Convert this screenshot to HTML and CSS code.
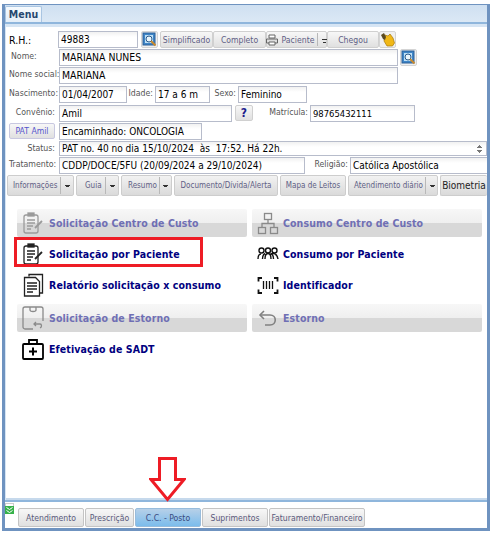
FILE: index.html
```html
<!DOCTYPE html>
<html lang="pt">
<head>
    <meta charset="UTF-8">
    <title>Menu</title>
    <link rel="stylesheet" href="styles.css">
</head>
<body>
    <div class="frame">
        <div class="tabstrip"><div class="tab">Menu</div></div>

        <div class="panel">
            <!-- Patient form -->
            <div class="form">
                <div class="row">
                    <span class="label label-main">R.H.:</span>
                    <span class="field w-rh">49883</span>
                    <button class="icon-btn ml-3"><svg width="15" height="15" viewBox="0 0 15 15"><rect x="1" y="1" width="12" height="12" fill="#3f86c8" stroke="#2c5f96"/><rect x="3" y="3" width="8" height="8" fill="#bfe0f5"/><circle cx="7" cy="7" r="3" fill="#e9f5fc" stroke="#2a5a8c"/><path d="M9 9l4.500 4.500" stroke="#c98a2c" stroke-width="2"/></svg></button>
                    <button class="btn w-simpl ml-2">Simplificado</button>
                    <button class="btn w-compl">Completo</button>
                    <button class="btn split w-pac">
                        <svg class="ico" width="14" height="12" viewBox="0 0 14 12"><path d="M4 1h6v3H4z" fill="#fff" stroke="#666"/><path d="M1.500 5h11v4h-11z" fill="#ddd" stroke="#666"/><path d="M4 8h6v3H4z" fill="#fff" stroke="#666"/></svg>
                        <span class="btn-text">Paciente</span><span class="caret"></span>
                    </button>
                    <button class="btn w-chegou">Chegou</button>
                    <button class="icon-btn"><svg width="15" height="15" viewBox="0 0 15 15"><path d="M5 3l3 1 2-2 3 4 1.500 5-2 3H7L4 9z" fill="#f0b818" stroke="#a8780c" stroke-width=".7"/><path d="M1 3l3-2 2 4-1 3-2-1z" fill="#5a4a20"/></svg></button>
                </div>
                <div class="row">
                    <span class="label label-left">Nome:</span>
                    <span class="field field-caps w-full">MARIANA NUNES</span>
                    <button class="icon-btn ml-2"><svg width="15" height="15" viewBox="0 0 15 15"><rect x="1" y="1" width="12" height="12" fill="#3f86c8" stroke="#2c5f96"/><rect x="3" y="3" width="8" height="8" fill="#bfe0f5"/><circle cx="7" cy="7" r="3" fill="#e9f5fc" stroke="#2a5a8c"/><path d="M9 9l4.500 4.500" stroke="#c98a2c" stroke-width="2"/></svg></button>
                </div>
                <div class="row row-tall">
                    <span class="label">Nome social:</span>
                    <span class="field field-caps w-full">MARIANA</span>
                </div>
                <div class="row row-tall">
                    <span class="label">Nascimento:</span>
                    <span class="field w-nasc">01/04/2007</span>
                    <span class="label-inline w-idade">Idade:</span>
                    <span class="field w-age">17 a 6 m</span>
                    <span class="label-inline w-sexo">Sexo:</span>
                    <span class="field w-sex">Feminino</span>
                </div>
                <div class="row">
                    <span class="label">Convênio:</span>
                    <span class="field w-conv">Amil</span>
                    <button class="btn btn-help">?</button>
                    <span class="label-inline w-matr">Matrícula:</span>
                    <span class="field field-digits w-matr-field">98765432111</span>
                </div>
                <div class="row">
                    <button class="btn btn-pat">PAT Amil</button>
                    <span class="field w-enc">Encaminhado: ONCOLOGIA</span>
                </div>
                <div class="row row-short">
                    <span class="label">Status:</span>
                    <span class="field field-short w-status">PAT no. 40 no dia 15/10/2024 &nbsp;às &nbsp;17:52. Há 22h.<span class="spinner"></span></span>
                </div>
                <div class="row">
                    <span class="label">Tratamento:</span>
                    <span class="field w-trat">CDDP/DOCE/5FU (20/09/2024 a 29/10/2024)</span>
                    <span class="label-inline w-relig">Religião:</span>
                    <span class="field w-relig-field">Católica Apostólica</span>
                </div>
            </div>

            <!-- Toolbar -->
            <div class="toolbar">
                <button class="btn tool split-tool w-info"><span class="btn-text">Informações</span><span class="caret"></span></button>
                <button class="btn tool split-tool w-guia"><span class="btn-text">Guia</span><span class="caret"></span></button>
                <button class="btn tool split-tool w-res"><span class="btn-text">Resumo</span><span class="caret"></span></button>
                <button class="btn tool w-doc">Documento/Dívida/Alerta</button>
                <button class="btn tool w-mapa">Mapa de Leitos</button>
                <button class="btn tool split-tool w-atend"><span class="btn-text">Atendimento diário</span><span class="caret"></span></button>
                <button class="btn tool w-bio">Biometria</button>
            </div>

            <!-- Menu items -->
            <div class="menu">
                <div class="item off">
                    <svg class="ico" width="24" height="24" viewBox="0 0 24 24" fill="none" stroke="#9a9a9a" stroke-width="1.300"><rect x="3" y="4" width="14" height="18" rx="2"/><rect x="7" y="2" width="6" height="3" fill="#9a9a9a"/><path d="M6 9h8M6 12h8M6 15h6M6 18h4"/><path d="M14 17l7-7" stroke-width="1.800"/></svg>
                    <span>Solicitação Centro de Custo</span>
                </div>
                <div class="item item-r off">
                    <svg class="ico" width="24" height="24" viewBox="0 0 24 24" fill="none" stroke="#8a8a8a" stroke-width="1.300"><rect x="8.500" y="2.500" width="7" height="6"/><rect x="2.500" y="16.500" width="7" height="6"/><rect x="14.500" y="16.500" width="7" height="6"/><path d="M12 8.500v4M6 16.500v-4h12v4"/></svg>
                    <span>Consumo Centro de Custo</span>
                </div>
                <div class="item">
                    <svg class="ico" width="24" height="24" viewBox="0 0 24 24" fill="none" stroke="#222" stroke-width="1.300"><rect x="3" y="4" width="14" height="18" rx="2"/><rect x="7" y="2" width="6" height="3" fill="#222"/><path d="M6 9h8M6 12h8M6 15h6M6 18h4"/><path d="M14 17l7-7" stroke-width="1.800"/></svg>
                    <span>Solicitação por Paciente</span>
                </div>
                <div class="item item-r">
                    <svg class="ico" width="24" height="24" viewBox="0 0 24 24" fill="none" stroke="#111" stroke-width="1.400"><circle cx="5.500" cy="8.500" r="2.500"/><circle cx="12" cy="8.500" r="2.500"/><circle cx="18.500" cy="8.500" r="2.500"/><path d="M2 17c0-4 2-5 3-5M9 11.500c-2 1-2.500 3-2.500 5.500M17.500 17c0-3-1-5-3-5.500M15 12c2-1 6-1 7 5M9 17c0-4 1.500-5.500 3-5.500s3 1.500 3 5.500"/></svg>
                    <span>Consumo por Paciente</span>
                </div>
                <div class="item">
                    <svg class="ico" width="24" height="24" viewBox="0 0 24 24" fill="none" stroke="#222" stroke-width="1.300"><path d="M8 3.500V1.500h13.500V20H19"/><path d="M3.500 4.500h11l4 4V23h-15z"/><path d="M6 10h10M6 13h10M6 16h10M6 19h6" stroke-width="1.500"/></svg>
                    <span>Relatório solicitação x consumo</span>
                </div>
                <div class="item item-r">
                    <svg class="ico" width="24" height="24" viewBox="0 0 24 24" fill="none" stroke="#111"><path d="M6 5H2.500v3.500M18 5h3.500v3.500M2.500 16.500V20H6M21.500 16.500V20H18" stroke-width="1.800"/><path d="M7.500 8v8M10.500 8v8M13.500 8v8M16.500 8v8" stroke-width="1.300"/></svg>
                    <span>Identificador</span>
                </div>
                <div class="item off mt-gap">
                    <svg class="ico" width="24" height="24" viewBox="0 0 24 24" fill="none" stroke="#8a8a8a" stroke-width="1.300"><path d="M12 23H4a2 2 0 0 1-2-2V3a2 2 0 0 1 2-2h16a2 2 0 0 1 2 2v12"/><path d="M9 1v3c0 2 6 2 6 0V1"/><path d="M15 16l-2 2 2 2M13 18h6c2 0 2 3 0 4"/></svg>
                    <span>Solicitação de Estorno</span>
                </div>
                <div class="item item-r off mt-gap">
                    <svg class="ico" width="24" height="24" viewBox="0 0 24 24" fill="none" stroke="#808080" stroke-width="1.600"><path d="M8 5L4 9l4 4"/><path d="M4 9h10c7 0 7 10 0 10h-5"/></svg>
                    <span>Estorno</span>
                </div>
                <div class="item mt-gap">
                    <svg class="ico" width="24" height="24" viewBox="0 0 24 24" fill="none" stroke="#000" stroke-width="1.800"><rect x="2" y="7" width="20" height="15" rx="1"/><path d="M8 7V3h8v4"/><path d="M12 10.500v8M8 14.500h8" stroke-width="2"/></svg>
                    <span>Efetivação de SADT</span>
                </div>
            </div>
        </div>

        <div class="footer">
            <svg class="corner-icon" width="9" height="12" viewBox="0 0 9 12"><rect x=".5" y=".5" width="8" height="3" fill="#fff" stroke="#ccc"/><rect x="0" y="3" width="9" height="8" fill="#37b24a"/><path d="M1.500 4.500l3 2 3-2M1.500 7.500l3 2 3-2" fill="none" stroke="#fff"/></svg>
            <button class="btn foot w-f1">Atendimento</button>
            <button class="btn foot w-f2">Prescrição</button>
            <button class="btn foot foot-on w-f3">C.C. - Posto</button>
            <button class="btn foot w-f4">Suprimentos</button>
            <button class="btn foot w-f5">Faturamento/Financeiro</button>
        </div>

        <!-- Annotations over the screenshot -->
        <div class="red-box"></div>
        <svg class="red-arrow" width="37" height="45" viewBox="0 0 37 45"><path d="M10.500 1.500h16v21h8.500l-16.500 20-16.500-20h8.500z" fill="none" stroke="#ee1c25" stroke-width="3"/></svg>
    </div>
</body>
</html>
```

FILE: styles.css
```css
* {
    margin: 0;
    padding: 0;
    box-sizing: border-box;
}

body {
    background: #fff;
    font-family: "DejaVu Sans", Tahoma, sans-serif;
    font-stretch: condensed;
    font-size: 10px;
    color: #000;
    overflow: hidden;
}

.frame {
    position: relative;
    width: 488px;
    height: 527px;
    margin: 4px 0 0 2px;
    border: 3px solid #6f93c0;
    border-top-width: 1px;
    display: flex;
    flex-direction: column;
    background: #d6e5f4;
    overflow: hidden;
}

/* Top tab */
.tabstrip {
    height: 19px;
    flex: none;
    padding-top: 1px;
    background: linear-gradient(to bottom, #cfe0f1, #dbe8f5);
    border-bottom: 2px solid #8fb6dc;
}

.tab {
    width: 37px;
    height: 16px;
    line-height: 15px;
    text-align: center;
    font-size: 10.5px;
    font-weight: bold;
    color: #26476f;
    background: linear-gradient(to bottom, #f6fafd, #e4eef8);
    border: 1px solid #a9c5e2;
    border-bottom: 0;
    border-radius: 2px 2px 0 0;
}

.panel {
    flex: 1;
    margin: 3px 0 0 1px;
    padding-top: 4px;
    background: #fff;
    border-bottom: 2px solid #c6d9ec;
    min-height: 0;
    overflow: hidden;
}

.form {
    padding-left: 3px;
}

.row {
    display: flex;
    align-items: flex-start;
    height: 18px;
}

.row-tall {
    height: 19px;
}

.row-short {
    height: 16px;
}

.label {
    width: 46px;
    flex: none;
    margin-right: 4px;
    text-align: right;
    font-size: 8.7px;
    line-height: 15px;
    color: #555;
    white-space: nowrap;
}

.label-main {
    width: 45px;
    text-align: left;
    color: #000;
    font-size: 10.5px;
    line-height: 18px;
}

.label-left {
    text-align: left;
    padding-left: 2px;
}

.label-inline {
    flex: none;
    font-size: 8.7px;
    line-height: 15px;
    color: #555;
    text-align: right;
    white-space: nowrap;
}

.field {
    position: relative;
    display: block;
    flex: none;
    height: 17px;
    line-height: 15px;
    padding-left: 2px;
    background: linear-gradient(to bottom, #f1f1f1, #fff 5px);
    border: 1px solid #b7bccb;
    white-space: nowrap;
    overflow: hidden;
}

.field-caps {
    font-size: 10.4px;
}

.field-digits {
    font-size: 9.4px;
}

.field-short {
    height: 15px;
    line-height: 13px;
}

.w-rh { width: 80px; }
.w-full { width: 339px; }
.w-nasc { width: 68px; }
.w-age { width: 55px; }
.w-sex { width: 69px; }
.w-conv { width: 173px; }
.w-matr-field { width: 105px; }
.w-enc { width: 143px; }
.w-status { width: 428px; }
.w-trat { width: 246px; }
.w-relig-field { width: 140px; }

.w-idade { width: 26px; margin-right: 2px; }
.w-sexo { width: 26px; margin-right: 2px; }
.w-matr { width: 55px; margin-right: 2px; }
.w-relig { width: 43px; margin-right: 2px; }

.spinner {
    position: absolute;
    right: 3px;
    top: 3px;
    width: 7px;
    height: 8px;
    background:
        linear-gradient(135deg, transparent 50%, #777 50%) 0 0 / 4px 3px no-repeat,
        linear-gradient(225deg, transparent 50%, #777 50%) 3px 0 / 4px 3px no-repeat,
        linear-gradient(45deg, transparent 50%, #777 50%) 0 5px / 4px 3px no-repeat,
        linear-gradient(315deg, transparent 50%, #777 50%) 3px 5px / 4px 3px no-repeat;
}

/* Buttons */
.btn {
    display: inline-flex;
    align-items: center;
    justify-content: center;
    flex: none;
    height: 17px;
    font-family: inherit;
    font-stretch: condensed;
    font-size: 8.6px;
    color: #5f5f85;
    background: linear-gradient(to bottom, #f7f7f7, #e0e0e0);
    border: 1px solid #d0d0d0;
    border-radius: 2px;
    white-space: nowrap;
}

.icon-btn {
    flex: none;
    width: 17px;
    height: 17px;
    display: inline-flex;
    align-items: center;
    justify-content: center;
    background: #f0f0f0;
    border: 1px solid #d4d4d4;
    border-radius: 2px;
}

.ml-2 { margin-left: 2px; }
.ml-3 { margin-left: 3px; }

.w-simpl { width: 53px; }
.w-compl { width: 53px; }
.w-pac { width: 61px; }
.w-chegou { width: 52px; }

.btn-text {
    padding: 0 2px;
}

.split {
    padding-left: 2px;
    gap: 1px;
}

.caret {
    flex: none;
    align-self: stretch;
    width: 13px;
    margin: 1px 0 1px auto;
    border-left: 1px solid #b8b8b8;
    background: linear-gradient(#333, #333) center / 5px 1px no-repeat,
        linear-gradient(#333, #333) center 9px / 3px 1px no-repeat;
}

.btn-help {
    width: 18px;
    height: 16px;
    margin-left: 3px;
    font-size: 12px;
    font-weight: bold;
    color: #1d1d8c;
}

.btn-pat {
    width: 46px;
    height: 16px;
    margin-right: 4px;
    color: #5555cc;
    border-color: #c8c8e0;
}

/* Toolbar row */
.toolbar {
    display: flex;
    height: 21px;
    gap: 2px;
    padding-left: 1px;
    overflow: hidden;
}

.tool {
    height: 21px;
    font-size: 8px;
    border-color: #cdcdcd;
    background: linear-gradient(to bottom, #f2f2f2, #dadada);
}

.split-tool {
    justify-content: flex-start;
    padding-left: 3px;
}

.w-info { width: 67px; }
.w-guia { width: 43px; padding-left: 6px; }
.w-res { width: 51px; padding-left: 4px; }
.w-doc { width: 104px; }
.w-mapa { width: 66px; }
.w-atend { width: 90px; }
.w-bio { width: 47px; font-size: 10px; color: #222; border-right: 0; }

/* Menu grid */
.menu {
    display: grid;
    grid-template-columns: 230px 230px;
    grid-auto-rows: 28px;
    column-gap: 5px;
    row-gap: 3px;
    margin: 13px 0 0 11px;
}

.item {
    display: flex;
    align-items: center;
    padding-left: 4px;
    gap: 4px;
    font-weight: bold;
    font-size: 10.5px;
    letter-spacing: .1px;
    color: #000080;
}

.item-r {
    gap: 3px;
}

.ico {
    flex: none;
}

.off {
    color: #6f6fb4;
    border-radius: 2px;
    background: linear-gradient(to bottom, #f7f7f7, #efefef 50%, #d8d8d8 50%, #d8d8d8);
}

.mt-gap {
    margin-top: 2px;
    margin-bottom: -2px;
}

/* Bottom tabs */
.footer {
    position: relative;
    flex: none;
    height: 28px;
    padding: 6px 0 0 13px;
    display: flex;
    align-items: flex-start;
    gap: 1px;
    background: #fff;
    border-top: 2px solid #8fb6dc;
}

.corner-icon {
    position: absolute;
    left: 0;
    top: 1px;
}

.foot {
    height: 19px;
    color: #5a5a7c;
    border-color: #c4c4c4;
}

.foot-on {
    color: #3a4a80;
    background: linear-gradient(to bottom, #b7d0e8, #7bbcec);
    border-color: #98bcdc;
}

.w-f1 { width: 66px; }
.w-f2 { width: 49px; }
.w-f3 { width: 66px; }
.w-f4 { width: 66px; }
.w-f5 { width: 96px; }

/* Annotations */
.red-box {
    position: absolute;
    left: 9px;
    top: 232px;
    width: 189px;
    height: 30px;
    border: 3px solid #ee1c25;
}

.red-arrow {
    position: absolute;
    left: 144px;
    top: 452px;
}
```
